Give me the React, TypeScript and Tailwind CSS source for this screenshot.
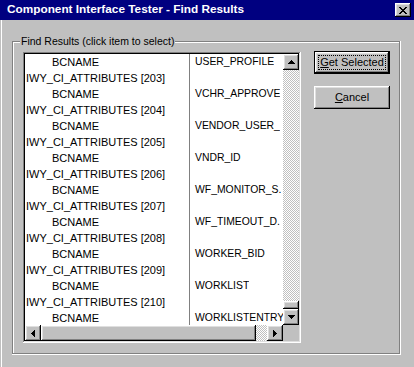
import React from "react";

const btn =
  "bg-[#c0c0c0] shadow-[inset_-1px_-1px_#000,inset_1px_1px_#fff,inset_-2px_-2px_#808080,inset_2px_2px_#dfdfdf]";
const checker =
  "bg-[image:repeating-conic-gradient(#c0c0c0_0_25%,#fff_0_50%)] bg-[length:2px_2px]";

function CloseGlyph() {
  const rows = [
    [0, 1, 6, 7],
    [1, 2, 5, 6],
    [2, 3, 4, 5],
    [3, 4],
    [2, 3, 4, 5],
    [1, 2, 5, 6],
    [0, 1, 6, 7],
  ];
  return (
    <svg width="8" height="7" viewBox="0 0 8 7" shapeRendering="crispEdges">
      {rows.map((r, y) =>
        r.map((x) => <rect key={`${x}-${y}`} x={x} y={y} width="1" height="1" fill="#000" />)
      )}
    </svg>
  );
}

function Arrow({ dir }: { dir: "up" | "down" | "left" | "right" }) {
  let rects: [number, number, number, number][] = [];
  if (dir === "up") rects = [[3, 0, 1, 1], [2, 1, 3, 1], [1, 2, 5, 1], [0, 3, 7, 1]];
  if (dir === "down") rects = [[0, 0, 7, 1], [1, 1, 5, 1], [2, 2, 3, 1], [3, 3, 1, 1]];
  if (dir === "left") rects = [[3, 0, 1, 7], [2, 1, 1, 5], [1, 2, 1, 3], [0, 3, 1, 1]];
  if (dir === "right") rects = [[0, 0, 1, 7], [1, 1, 1, 5], [2, 2, 1, 3], [3, 3, 1, 1]];
  const horiz = dir === "up" || dir === "down";
  const w = horiz ? 7 : 4;
  const h = horiz ? 4 : 7;
  return (
    <svg width={w} height={h} viewBox={`0 0 ${w} ${h}`} shapeRendering="crispEdges">
      {rects.map(([x, y, rw, rh], i) => (
        <rect key={i} x={x} y={y} width={rw} height={rh} fill="#000" />
      ))}
    </svg>
  );
}

const items: [string, number][] = [
  ["USER_PROFILE", 203],
  ["VCHR_APPROVE", 204],
  ["VENDOR_USER_", 205],
  ["VNDR_ID", 206],
  ["WF_MONITOR_S.", 207],
  ["WF_TIMEOUT_D.", 208],
  ["WORKER_BID", 209],
  ["WORKLIST", 210],
  ["WORKLISTENTRY", 211],
];

function Line({ left, right, indent }: { left: string; right: string; indent: boolean }) {
  return (
    <div className="flex h-[16px] leading-[16px] whitespace-nowrap">
      <div
        className={`w-[165px] shrink-0 border-r border-[#808080] text-[11px] ${indent ? "pl-[27px]" : "pl-[1px]"}`}
      >
        {left}
      </div>
      <div className="pl-[5px] overflow-hidden text-[10.4px]">{right}</div>
    </div>
  );
}

function ListBox() {
  const lines: { left: string; right: string; indent: boolean }[] = [];
  items.forEach(([name, n], i) => {
    lines.push({ left: "BCNAME", right: name, indent: true });
    if (i < items.length - 1) lines.push({ left: `IWY_CI_ATTRIBUTES [${n}]`, right: "", indent: false });
  });
  return (
    <div className="w-[278px] h-[291px] mt-[1px] bg-white p-[2px] shadow-[inset_-1px_-1px_#fff,inset_1px_1px_#808080,inset_-2px_-2px_#dfdfdf,inset_2px_2px_#000] grid grid-cols-[258px_16px] grid-rows-[271px_16px]">
      <div className="overflow-hidden bg-white">
        {lines.map((l, i) => (
          <Line key={i} {...l} />
        ))}
      </div>
      <div className="flex flex-col">
        <div className={`h-[16px] ${btn} flex items-center justify-center`}>
          <Arrow dir="up" />
        </div>
        <div className={`flex-1 ${checker}`} />
        <div className={`h-[8px] ${btn}`} />
        <div className={`h-[16px] ${btn} flex items-center justify-center`}>
          <Arrow dir="down" />
        </div>
      </div>
      <div className="flex">
        <div className={`w-[16px] ${btn} flex items-center justify-center`}>
          <Arrow dir="left" />
        </div>
        <div className={`w-[215px] ${btn}`} />
        <div className={`flex-1 ${checker}`} />
        <div className={`w-[16px] ${btn} flex items-center justify-center`}>
          <Arrow dir="right" />
        </div>
      </div>
      <div className="bg-[#c0c0c0]" />
    </div>
  );
}

export default function App() {
  return (
    <div className="w-[414px] h-[367px] bg-[#c0c0c0] overflow-hidden font-['Liberation_Sans',Arial,sans-serif] text-black">
      <div className="h-[20px] bg-[#000080] flex items-center justify-between pl-[7px] pr-[3px]">
        <span className="text-white font-bold text-[11.8px] leading-none">
          Component Interface Tester - Find Results
        </span>
        <div className={`w-[16px] h-[14px] ${btn} flex items-center justify-center`}>
          <CloseGlyph />
        </div>
      </div>
      <div className="ml-[1px] border-l border-white h-[347px] pl-[10px] pt-[21px]">
        <div className="relative w-[389px] h-[314px] shadow-[inset_-1px_-1px_#fff,inset_-2px_-2px_#808080,inset_1px_1px_#808080,inset_2px_2px_#fff]">
          <div className="absolute left-[8px] top-[-7px] px-[1px] bg-[#c0c0c0] text-[10.5px] leading-[14px] whitespace-nowrap">
            Find Results (click item to select)
          </div>
          <div className="flex items-start gap-[13px] pl-[11px] pt-[10px]">
            <ListBox />
            <div className="flex flex-col gap-[12px]">
              <div className="w-[76px] h-[23px] border border-black">
                <div className={`relative w-full h-full ${btn} flex items-center justify-center text-[11px]`}>
                  <div className="absolute inset-[3px] border border-dotted border-black" />
                  <span>
                    <span className="underline">G</span>et Selected
                  </span>
                </div>
              </div>
              <div className={`w-[76px] h-[23px] ${btn} flex items-center justify-center text-[11px]`}>
                <span>
                  <span className="underline">C</span>ancel
                </span>
              </div>
            </div>
          </div>
        </div>
      </div>
    </div>
  );
}
